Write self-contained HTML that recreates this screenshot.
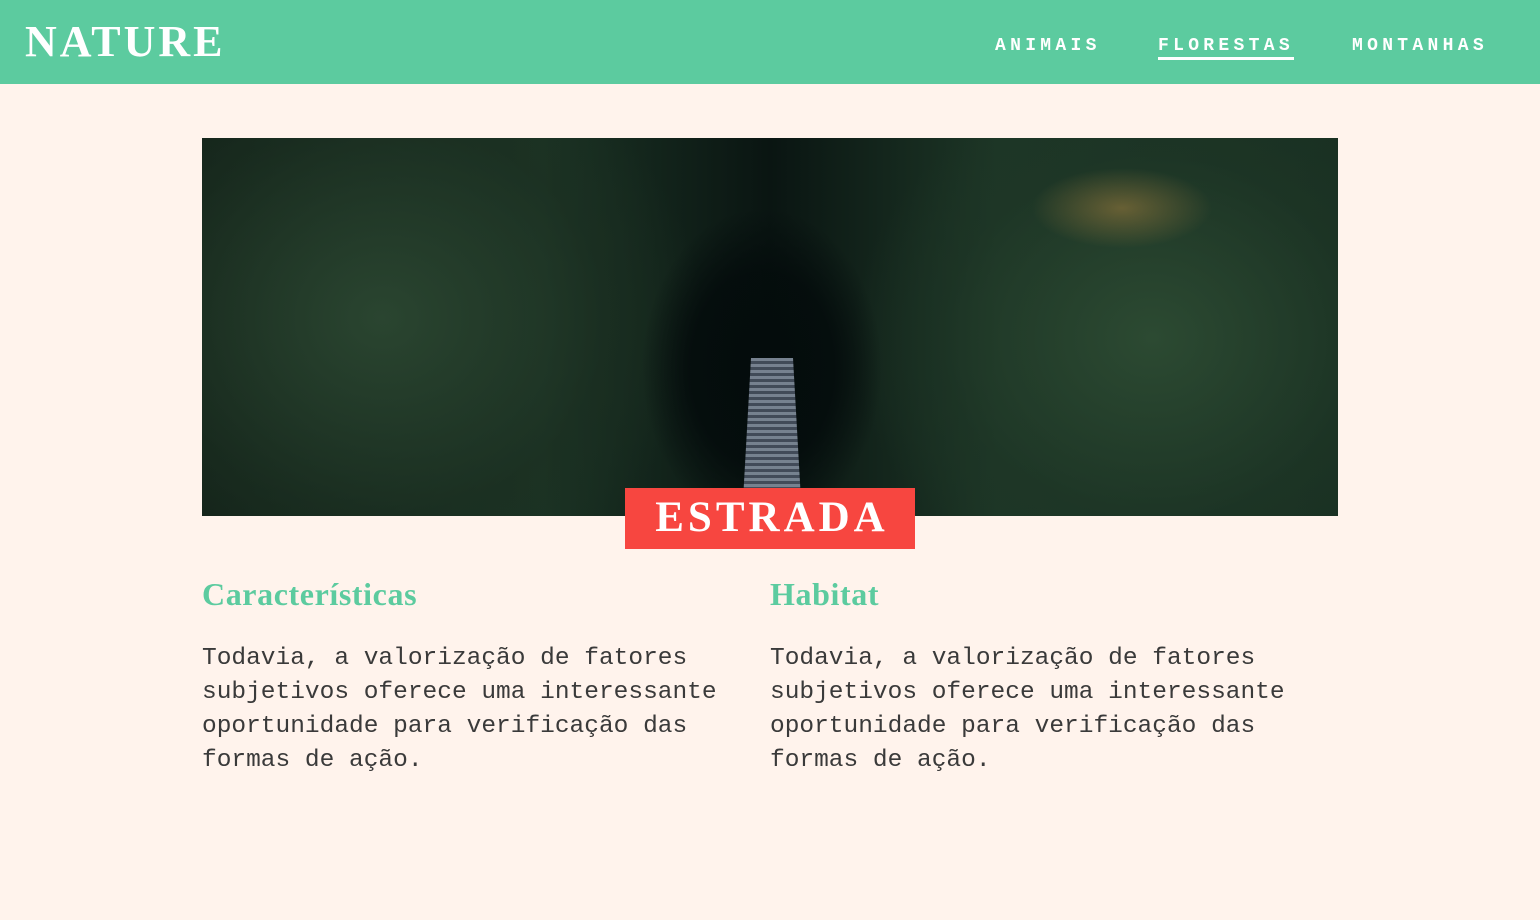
<!DOCTYPE html>
<html><head><meta charset="utf-8"><style>
*{margin:0;padding:0;box-sizing:border-box}
body{width:1540px;height:920px;background:#fff3ec;overflow:hidden;position:relative;font-family:"Liberation Mono",monospace}
header{position:absolute;left:0;top:0;width:1540px;height:84px;background:#5ccb9f}
.logo{position:absolute;left:25px;top:18px;font-family:"Liberation Serif",serif;font-weight:bold;font-size:44px;letter-spacing:3px;color:#fff;line-height:48px}
nav a{position:absolute;top:35px;color:#fff;font-weight:bold;font-size:18px;letter-spacing:4.3px;line-height:22px;text-decoration:none}
.u{border-bottom:3px solid #fff;padding-bottom:0px}
.img{position:absolute;left:202px;top:138px;width:1136px;height:378px;overflow:hidden;
background:
radial-gradient(ellipse 120px 160px at 560px 230px,#040c0c 0%,rgba(4,12,12,0.9) 60%,rgba(4,12,12,0) 100%),
radial-gradient(ellipse 90px 40px at 920px 70px,rgba(150,120,60,0.6),rgba(0,0,0,0) 100%),
radial-gradient(ellipse 300px 260px at 950px 200px,#2c4a32 0%,rgba(30,54,38,0.6) 70%,rgba(0,0,0,0) 100%),
radial-gradient(ellipse 320px 280px at 180px 180px,#2a4530 0%,rgba(28,48,34,0.6) 70%,rgba(0,0,0,0) 100%),
linear-gradient(90deg,#132219,#1b3324 30%,#0a1512 50%,#1d3626 70%,#193022);}
.bridge{position:absolute;left:540px;top:220px;width:60px;height:160px;background:repeating-linear-gradient(180deg,#8a96a6 0 3px,#4c5666 3px 6px);clip-path:polygon(15% 0,85% 0,100% 100%,0 100%);opacity:.85}
.badge{position:absolute;left:625px;top:488px;width:290px;height:61px;background:#f74640;color:#fff;font-family:"Liberation Serif",serif;font-weight:bold;font-size:43px;letter-spacing:4px;text-align:center;line-height:60px;padding-left:4px}
h2{position:absolute;top:575px;font-family:"Liberation Serif",serif;font-weight:bold;font-size:32px;letter-spacing:0.6px;color:#5ccb9f;line-height:38px}
p{position:absolute;top:642px;width:580px;font-size:24.5px;line-height:34px;color:#3a3a3a}
</style></head><body>
<header><div class="logo">NATURE</div>
<nav><a style="left:995px">ANIMAIS</a><a class="u" style="left:1158px">FLORESTAS</a><a style="left:1352px">MONTANHAS</a></nav></header>
<div class="img"><div class="bridge"></div></div>
<div class="badge">ESTRADA</div>
<h2 style="left:202px">Características</h2>
<h2 style="left:770px">Habitat</h2>
<p style="left:202px">Todavia, a valorização de fatores subjetivos oferece uma interessante oportunidade para verificação das formas de ação.</p>
<p style="left:770px">Todavia, a valorização de fatores subjetivos oferece uma interessante oportunidade para verificação das formas de ação.</p>
</body></html>
